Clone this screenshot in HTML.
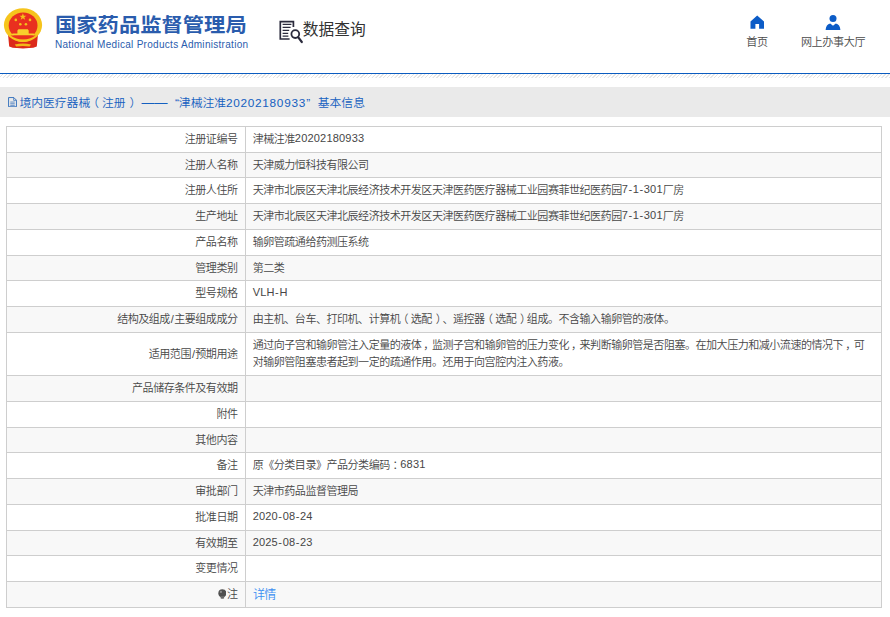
<!DOCTYPE html>
<html lang="zh-CN">
<head>
<meta charset="utf-8">
<title>国家药品监督管理局 数据查询</title>
<style>
html,body{margin:0;padding:0;background:#fff;}
body{width:890px;height:617px;overflow:hidden;position:relative;font-family:"Liberation Sans","Noto Sans CJK SC",sans-serif;color:#444;text-spacing-trim:space-all;}
.abs{position:absolute;white-space:nowrap;}
#title{left:55px;top:9.5px;font-size:21.3px;line-height:30px;font-weight:700;color:#2a5cad;transform:scaleY(0.93);transform-origin:0 50%;}
#sub{left:55px;top:38.2px;font-size:10px;line-height:14px;color:#2a5cad;letter-spacing:0.29px;}
#dq{left:302.8px;top:18.2px;font-size:15.75px;line-height:24px;color:#333;transform:scaleY(1.03);}
.nav{font-size:11.1px;letter-spacing:-0.4px;font-weight:350;line-height:14px;color:#4a4a4a;text-align:center;width:100px;}
#blue{left:0;top:72.8px;width:890px;height:1.3px;background:#0b5cc0;}
#hatch{left:0;top:74.3px;width:890px;height:3.6px;background:repeating-linear-gradient(135deg,#fff 0,#fff 1.5px,#e3e3e3 1.8px,#e3e3e3 2.5px,#fff 2.69px);}
#bar{left:0;top:87px;width:890px;height:29.8px;background:#eaeaea;}
#bartxt{left:19.4px;top:93.6px;font-size:11.8px;line-height:18px;color:#1560c0;font-weight:350;}
#wrap{position:absolute;left:0;top:0;width:1003.38px;height:695.60px;zoom:0.887;}
table{position:absolute;left:6.76px;top:141.94px;width:987.37px;border-collapse:collapse;table-layout:fixed;font-size:12.45px;letter-spacing:-0.55px;line-height:19.91px;color:#464646;font-weight:350;}
td{border:1px solid #cecece;padding:4.5px 8px 3.5px;vertical-align:middle;white-space:nowrap;}
td.k{text-align:right;width:251.88px;}
tr.g td{background:#f8f8f8;}
table{border:1px solid #cacaca;}
.n{letter-spacing:0.2px;position:relative;top:-1px;}
.h{padding:0 0.5px;}
.pc{position:relative;left:0.25em;}
.sl{padding:0 0.9px 0 1.1px;}
.pm{position:relative;left:0.18em;}
.pl{position:relative;left:-0.25em;}
.pr{position:relative;left:0.34em;}
td.lk{font-size:13.6px;letter-spacing:-0.95px;}
a{color:#3b8ff2;position:relative;top:1.6px;left:0.4px;}
.bulb{vertical-align:-0.9px;margin-right:0.6px;}
</style>
</head>
<body>
<!-- header -->
<svg class="abs" style="left:0;top:0" width="48" height="56" viewBox="0 0 48 56">
  <path d="M8 34 L9.2 46.4 Q13 48.2 17 48 L23 48.4 L29 48 Q33 48.2 36.8 46.4 L38 34 Q23 46 8 34Z" fill="#dc2a1b"/>
  <ellipse cx="23" cy="25.1" rx="19.1" ry="16.9" fill="#f6c41c"/>
  <ellipse cx="23.1" cy="25.6" rx="14.4" ry="13.2" fill="#e9301f"/>
  <polygon points="22.9,13.2 23.8,15.7 26.4,15.7 24.3,17.3 25.1,19.8 22.9,18.3 20.7,19.8 21.5,17.3 19.4,15.7 22,15.7" fill="#f3c21a"/>
  <circle cx="15.8" cy="19.9" r="1.3" fill="#f3c21a"/><circle cx="30" cy="19.9" r="1.3" fill="#f3c21a"/>
  <circle cx="20.3" cy="24.2" r="1.3" fill="#f3c21a"/><circle cx="25.9" cy="24.2" r="1.3" fill="#f3c21a"/>
  <path d="M18.4 29.2 H27.8 L28.7 30.6 V33.4 H33.8 L34.4 35.6 H11.8 L12.4 33.4 H17.4 V30.6Z" fill="#f8cf2c"/>
  <path d="M10.5 35.6 H35.6 Q30 39.6 23 39.8 Q16 39.6 10.5 35.6Z" fill="#e9301f"/>
  <path d="M17.6 41 Q23 38.2 28.4 41 Q23 43 17.6 41Z" fill="#f6c41c"/>
  <path d="M14.8 44.4 Q23 42.6 31 44.4 L29.6 46.6 Q23 45.2 16.2 46.6Z" fill="#f2b818"/>
</svg>
<div class="abs" id="title">国家药品监督管理局</div>
<div class="abs" id="sub">National Medical Products Administration</div>
<svg class="abs" style="left:277px;top:17px" width="30" height="30" viewBox="0 0 30 30" fill="none" stroke="#2a2a3c">
  <path d="M12.6 22 H3.3 V4.6 H16.4 V10" stroke-width="1.7"/>
  <path d="M5.6 7.4 H14.4 M5.6 10.4 H13.6 M5.6 13.4 H12.2 M5.6 16.4 H11.2 M5.6 19.2 H11.4" stroke-width="1.2"/>
  <circle cx="18.3" cy="17.1" r="3.9" stroke-width="1.8"/>
  <path d="M21.3 20.4 L24.8 25" stroke-width="2.2" stroke-linecap="round"/>
</svg>
<div class="abs" id="dq">数据查询</div>
<svg class="abs" style="left:749px;top:14px" width="16" height="16" viewBox="0 0 16 16"><path d="M8.2 1.6 L15 7.6 V14.7 H10.1 V10 H6.4 V14.7 H1.5 V7.6Z" fill="#0c5cc7"/></svg>
<div class="abs nav" style="left:707px;top:34.5px">首页</div>
<svg class="abs" style="left:825px;top:13.9px" width="16" height="17" viewBox="0 0 16 17"><circle cx="8" cy="4.4" r="3.5" fill="#0c5cc7"/><path d="M0.6 16 Q1 10.5 5.2 9.6 L8 11.8 L10.8 9.6 Q15 10.5 15.4 16Z" fill="#0c5cc7"/></svg>
<div class="abs nav" style="left:783px;top:34.5px">网上办事大厅</div>
<div class="abs" id="blue"></div>
<div class="abs" id="hatch"></div>
<div class="abs" id="bar"></div>
<svg class="abs" style="left:8px;top:96.6px" width="9.4" height="10.3" viewBox="0 0 10 11" fill="none" stroke="#1b5fb5" stroke-width="0.9"><path d="M0.6 0.6 H6.2 L9 3.4 V10.4 H0.6Z"/><path d="M6 0.8 V3.6 H8.8 M2.4 5.4 H7.2 M2.4 7.2 H7.2 M2.4 8.9 H7.2" stroke-width="0.7"/></svg>
<div class="abs" id="bartxt">境内医疗器械<span class="pl">（</span>注册<span class="pr">）</span><span style="font-size:13px;margin-left:4.2px">——</span><span style="margin-left:7.3px">“</span>津械注准<span style="letter-spacing:0.7px">20202180933</span><span style="margin-left:0.4px">”</span><span style="margin-left:7.5px">基本信息</span></div>
<div id="wrap">
<table>
<tr><td class="k">注册证编号</td><td class="v">津械注准<span class="n">20202180933</span></td></tr>
<tr class="g"><td class="k">注册人名称</td><td class="v">天津威力恒科技有限公司</td></tr>
<tr><td class="k">注册人住所</td><td class="v">天津市北辰区天津北辰经济技术开发区天津医药医疗器械工业园赛菲世纪医药园<span class="n">7<span class="h">-</span>1<span class="h">-</span>301</span>厂房</td></tr>
<tr class="g"><td class="k">生产地址</td><td class="v">天津市北辰区天津北辰经济技术开发区天津医药医疗器械工业园赛菲世纪医药园<span class="n">7<span class="h">-</span>1<span class="h">-</span>301</span>厂房</td></tr>
<tr><td class="k">产品名称</td><td class="v">输卵管疏通给药测压系统</td></tr>
<tr class="g"><td class="k">管理类别</td><td class="v">第二类</td></tr>
<tr><td class="k">型号规格</td><td class="v"><span class="n">VLH<span class="h">-</span>H</span></td></tr>
<tr class="g"><td class="k">结构及组成<span class="sl">/</span>主要组成成分</td><td class="v">由主机、台车、打印机、计算机<span class="pl">（</span>选配<span class="pr">）</span>、遥控器<span class="pl">（</span>选配<span class="pr">）</span>组成。不含输入输卵管的液体。</td></tr>
<tr><td class="k">适用范围<span class="sl">/</span>预期用途</td><td class="v">通过向子宫和输卵管注入定量的液体<span class="pm">，</span>监测子宫和输卵管的压力变化<span class="pm">，</span>来判断输卵管是否阻塞。在加大压力和减小流速的情况下<span class="pm">，</span>可<br>对输卵管阻塞患者起到一定的疏通作用。还用于向宫腔内注入药液。</td></tr>
<tr class="g"><td class="k">产品储存条件及有效期</td><td class="v"></td></tr>
<tr><td class="k">附件</td><td class="v"></td></tr>
<tr class="g"><td class="k">其他内容</td><td class="v"></td></tr>
<tr><td class="k">备注</td><td class="v">原《分类目录》产品分类编码<span class="pc">：</span><span class="n">6831</span></td></tr>
<tr class="g"><td class="k">审批部门</td><td class="v">天津市药品监督管理局</td></tr>
<tr><td class="k">批准日期</td><td class="v"><span class="n">2020<span class="h">-</span>08<span class="h">-</span>24</span></td></tr>
<tr class="g"><td class="k">有效期至</td><td class="v"><span class="n">2025<span class="h">-</span>08<span class="h">-</span>23</span></td></tr>
<tr><td class="k">变更情况</td><td class="v"></td></tr>
<tr class="g"><td class="k"><svg class="bulb" width="9.8" height="11.6" viewBox="0 0 9.8 11.6"><circle cx="4.9" cy="4.7" r="4.5" fill="#505050"/><path d="M2.9 8 H6.9 V10.3 Q4.9 11.9 2.9 10.3Z" fill="#6a6a6a"/><circle cx="3.3" cy="3.3" r="1.3" fill="#8c8c8c"/></svg>注</td><td class="v lk"><a>详情</a></td></tr>
</table>
</div>
</body>
</html>
